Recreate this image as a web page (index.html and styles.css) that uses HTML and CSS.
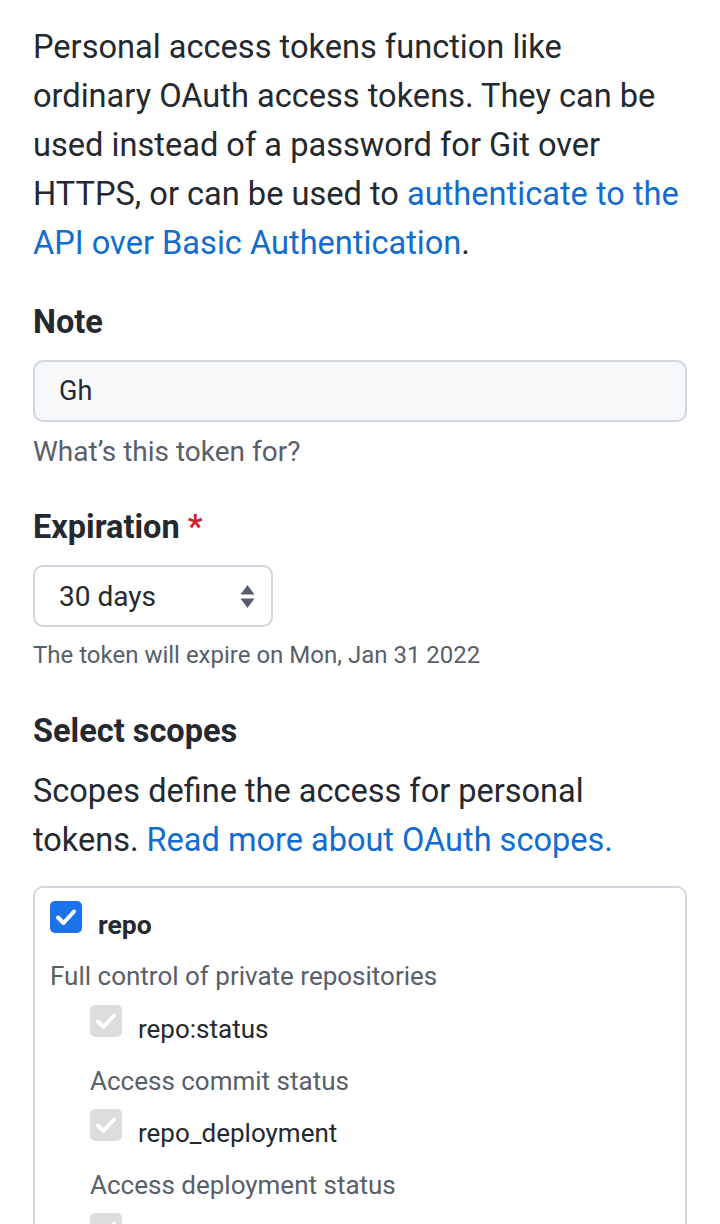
FILE: index.html
```html
<!DOCTYPE html>
<html>
<head>
<meta charset="utf-8">
<link rel="stylesheet" href="styles.css">
</head>
<body>
<main class="page">
  <p class="intro">Personal access tokens function like ordinary OAuth access tokens. They can be used instead of a password for Git over HTTPS, or can be used to <a href="#">authenticate to the API over Basic Authentication</a>.</p>

  <h2 class="label label-note">Note</h2>
  <div class="input">Gh</div>
  <p class="help">What’s this token for?</p>

  <h2 class="label label-exp">Expiration <span class="req">*</span></h2>
  <div class="select">
    <span>30 days</span>
    <svg class="arrows" width="15" height="25" viewBox="0 0 15 25"><path d="M7.5 1 L14.5 10.5 H0.5 Z M7.5 24 L14.5 14.5 H0.5 Z" fill="#57606a"/></svg>
  </div>
  <p class="note">The token will expire on Mon, Jan 31 2022</p>

  <h2 class="label label-scopes">Select scopes</h2>
  <p class="scopes-desc">Scopes define the access for personal tokens. <a href="#">Read more about OAuth scopes.</a></p>

  <div class="scope-box">
    <div class="row">
      <span class="cb cb-on"><svg width="32" height="32" viewBox="0 0 32 32"><path d="M8 16.5 L13.5 22 L24 10.5" fill="none" stroke="#fff" stroke-width="4" stroke-linecap="round" stroke-linejoin="round"/></svg></span>
      <span class="name name-main">repo</span>
    </div>
    <p class="desc">Full control of private repositories</p>
    <div class="sub">
      <div class="row">
        <span class="cb cb-dis"><svg width="32" height="32" viewBox="0 0 32 32"><path d="M8 16.5 L13.5 22 L24 10.5" fill="none" stroke="#fff" stroke-width="4" stroke-linecap="round" stroke-linejoin="round"/></svg></span>
        <span class="name">repo:status</span>
      </div>
      <p class="desc">Access commit status</p>
      <div class="row">
        <span class="cb cb-dis"><svg width="32" height="32" viewBox="0 0 32 32"><path d="M8 16.5 L13.5 22 L24 10.5" fill="none" stroke="#fff" stroke-width="4" stroke-linecap="round" stroke-linejoin="round"/></svg></span>
        <span class="name">repo_deployment</span>
      </div>
      <p class="desc">Access deployment status</p>
      <div class="row">
        <span class="cb cb-dis"><svg width="32" height="32" viewBox="0 0 32 32"><path d="M8 16.5 L13.5 22 L24 10.5" fill="none" stroke="#fff" stroke-width="4" stroke-linecap="round" stroke-linejoin="round"/></svg></span>
      </div>
    </div>
  </div>
</main>
</body>
</html>
```

FILE: styles.css
```css
html, body {
  margin: 0;
  padding: 0;
  background: #ffffff;
  overflow: hidden;
}
body {
  font-family: Roboto, "Noto Sans", sans-serif;
  color: #24292f;
}
.page {
  padding: 23px 33px 0 33px;
}
a {
  color: #116ccf;
  text-decoration: none;
}
.intro {
  margin: 0;
  padding-right: 2px;
  font-size: 32.6px;
  line-height: 49px;
}
.label {
  margin: 0;
  font-size: 32.5px;
  line-height: 40px;
  font-weight: 700;
}
.label-note { margin-top: 34px; }
.label-exp { margin-top: 37px; }
.label-scopes { margin-top: 41px; }
.req { color: #cf222e; }
.input {
  margin-top: 18px;
  height: 58px;
  border: 2px solid #d0d7de;
  border-radius: 10px;
  background: #f6f8fa;
  padding: 0 24px;
  display: flex;
  align-items: center;
  font-size: 27px;
}
.help {
  margin: 12px 0 0;
  font-size: 28px;
  line-height: 36px;
  color: #57606a;
}
.select {
  margin-top: 18px;
  box-sizing: border-box;
  width: 240px;
  height: 62px;
  border: 2px solid #d0d7de;
  border-radius: 10px;
  padding: 0 16px 0 24px;
  display: flex;
  align-items: center;
  justify-content: space-between;
  font-size: 28px;
}
.arrows { display: block; }
.note {
  margin: 13px 0 0;
  font-size: 24px;
  line-height: 30px;
  color: #57606a;
}
.scopes-desc {
  margin: 16px 0 0;
  font-size: 32.5px;
  line-height: 49px;
}
.scope-box {
  margin-top: 21px;
  border: 2px solid #d0d7de;
  border-bottom: none;
  border-radius: 10px 10px 0 0;
  padding: 13px 15px 40px;
}
.row {
  display: flex;
  align-items: flex-end;
  gap: 16px;
}
.cb {
  width: 32px;
  height: 32px;
  border-radius: 5px;
  flex: none;
  display: block;
}
.cb svg { display: block; }
.cb-on { background: #1a73e8; }
.cb-dis { background: #dcdcdc; }
.name {
  font-size: 26px;
  line-height: 26px;
  position: relative;
  top: 5px;
}
.name-main { font-weight: 700; font-size: 26.5px; }
.desc {
  margin: 25px 0 0;
  font-size: 26px;
  line-height: 36px;
  color: #57606a;
}
.sub {
  padding-left: 40px;
  margin-top: 11px;
}
.sub .desc { margin: 26px 0 10px; }
```
